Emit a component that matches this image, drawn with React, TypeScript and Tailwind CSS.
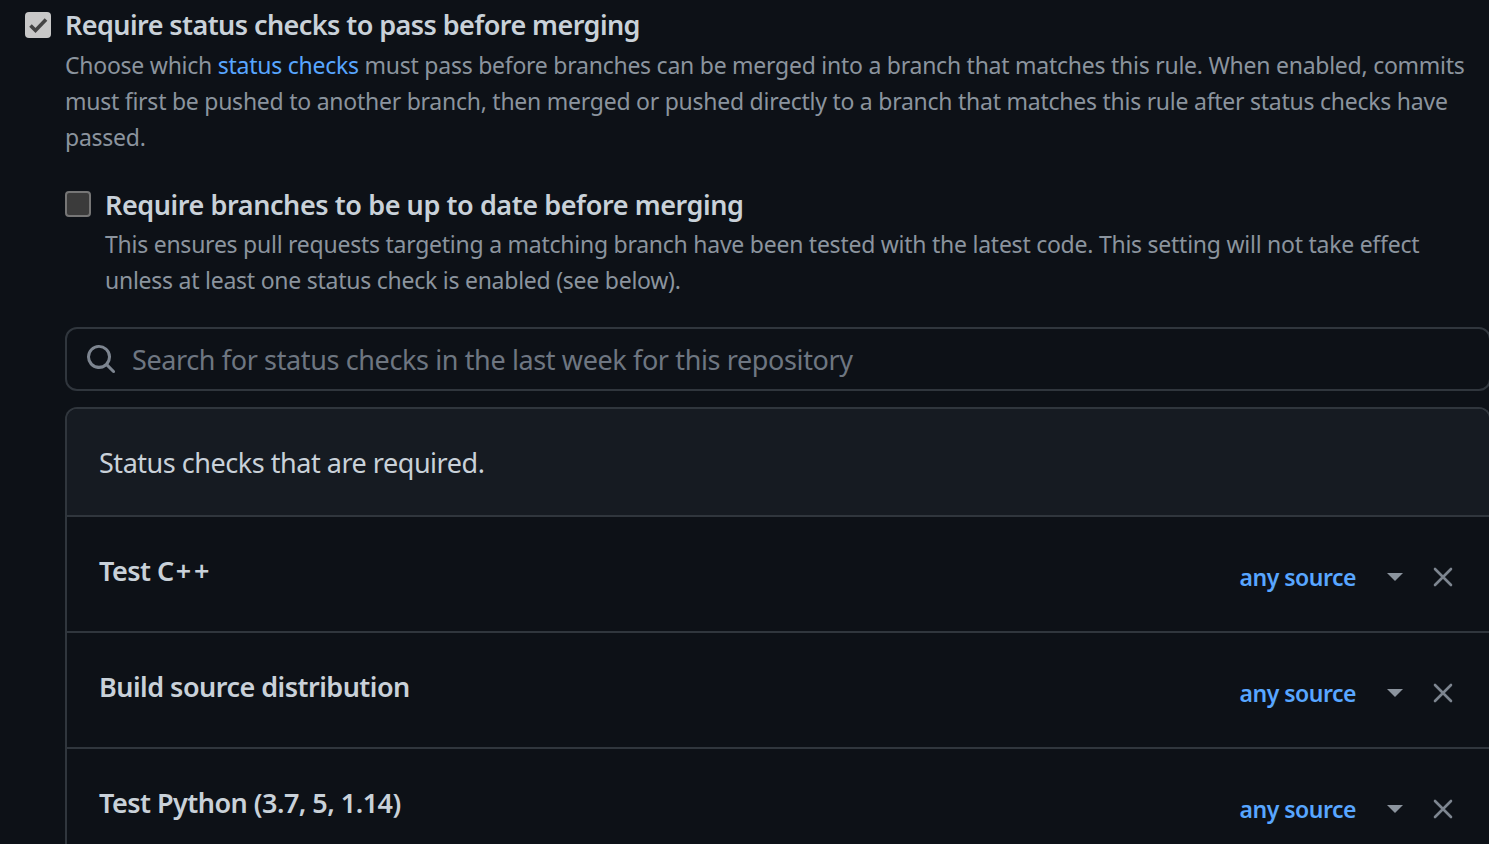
import type { ReactNode } from "react";

const FONT = "font-['Noto_Sans','Liberation_Sans',sans-serif]";

const checks: { id: string; name: ReactNode }[] = [
  { id: "cpp", name: <>Test C<span className="ml-[2px] tracking-[3px]">++</span></> },
  { id: "sdist", name: "Build source distribution" },
  { id: "python", name: "Test Python (3.7, 5, 1.14)" },
];

function SearchIcon() {
  return (
    <svg width="32" height="32" viewBox="0 0 16 16" fill="#7d8590" className="shrink-0">
      <path d="M10.68 11.74a6 6 0 0 1-7.922-8.982 6 6 0 0 1 8.982 7.922l3.04 3.04a.749.749 0 0 1-.326 1.275.749.749 0 0 1-.734-.215ZM11.5 7a4.499 4.499 0 1 0-8.997 0A4.499 4.499 0 0 0 11.5 7Z" />
    </svg>
  );
}

function CloseIcon() {
  return (
    <svg width="28" height="28" viewBox="0 0 28 28" className="shrink-0" stroke="#7d8590" strokeWidth="2.6" strokeLinecap="round">
      <path d="M6 6 22 22M22 6 6 22" />
    </svg>
  );
}

function CheckRow({ name, last }: { name: ReactNode; last: boolean }) {
  return (
    <div className={`flex h-[116px] items-start justify-between pl-[32px] pr-[32px] ${last ? "" : "border-b-2 border-[#30363d]"}`}>
      <span className="mt-[36px] text-[27px] leading-[36px] font-semibold tracking-[-0.52px] text-[#c9d1d9]">{name}</span>
      <div className="mt-[45px] flex items-center">
        <span className="text-[23px] leading-[30px] font-semibold tracking-[-0.5px] text-[#58a6ff]">any source</span>
        <span className="ml-[31px] h-0 w-0 border-x-[8px] border-t-[8px] border-x-transparent border-t-[#8b949e]" />
        <span className="ml-[26px]"><CloseIcon /></span>
      </div>
    </div>
  );
}

export default function App() {
  return (
    <div className={`${FONT} h-[844px] w-[1489px] overflow-hidden bg-[#0d1117]`}>
      <div className="flex w-[1491px] pl-[25px] pt-[12px]">
        <div className="flex h-[26px] w-[26px] shrink-0 items-center justify-center rounded-[4px] bg-[#c8c8c8]">
          <svg width="26" height="26" viewBox="0 0 26 26" fill="none" stroke="#444444" strokeWidth="3.6">
            <path d="M5.5 13.5 10.5 18.5 21 7.5" />
          </svg>
        </div>
        <div className="ml-[14px] min-w-0 flex-1">
          <div className="-mt-[5px] text-[27px] leading-[36px] font-semibold tracking-[-0.57px] text-[#c9d1d9]">
            Require status checks to pass before merging
          </div>
          <p className="mt-[4px] w-[1412px] text-[23px] leading-[36px] tracking-[-0.25px] text-[#8b949e]">
            Choose which <a className="text-[#58a6ff]">status checks</a> must pass before branches can be merged into a branch that matches this rule. When enabled, commits must first be pushed to another branch, then merged or pushed directly to a branch that matches this rule after status checks have passed.
          </p>
          <div className="mt-[36px] flex">
            <div className="h-[26px] w-[26px] shrink-0 rounded-[4px] border-2 border-[#767676] bg-[#3b3b3b]" />
            <div className="ml-[14px] min-w-0 flex-1">
              <div className="-mt-[4px] text-[27px] leading-[36px] font-semibold tracking-[-0.42px] text-[#c9d1d9]">
                Require branches to be up to date before merging
              </div>
              <p className="mt-[3px] w-[1340px] text-[23px] leading-[36px] tracking-[-0.25px] text-[#8b949e]">
                This ensures pull requests targeting a matching branch have been tested with the latest code. This setting will not take effect unless at least one status check is enabled (see below).
              </p>
            </div>
          </div>
          <div className="mt-[29px] flex h-[64px] items-center rounded-[12px] border-2 border-[#30363d] pl-[18px]">
            <SearchIcon />
            <span className="ml-[15px] pt-[2px] text-[27px] tracking-[-0.38px] text-[#6e7681]">Search for status checks in the last week for this repository</span>
          </div>
          <div className="mt-[16px] rounded-t-[12px] border-x-2 border-t-2 border-[#30363d]">
            <div className="flex h-[108px] items-center rounded-t-[10px] border-b-2 border-[#30363d] bg-[#161b22] pl-[32px]">
              <span className="pt-[2px] text-[27px] tracking-[-0.47px] text-[#c9d1d9]">Status checks that are required.</span>
            </div>
            {checks.map((c, i) => (
              <CheckRow key={c.id} name={c.name} last={i === checks.length - 1} />
            ))}
          </div>
        </div>
      </div>
    </div>
  );
}
